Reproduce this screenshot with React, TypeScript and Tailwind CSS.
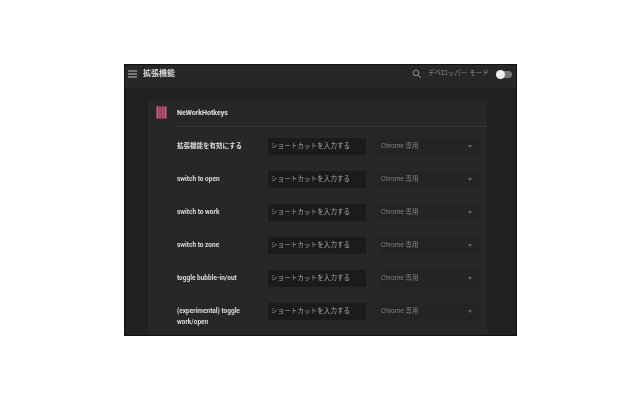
const rows = [
  "拡張機能を有効にする",
  "switch to open",
  "switch to work",
  "switch to zone",
  "toggle bubble-in/out",
];

const cjk = "font-['Roboto','Noto_Sans_CJK_JP',sans-serif]";

function Controls() {
  return (
    <div className="flex items-center">
      <div className="w-[98px] h-[17px] bg-[#1b1b1c] flex items-center pl-[3px] text-[6.5px] tracking-[0.1px] text-[#a8a8a8] whitespace-nowrap">
        ショートカットを入力する
      </div>
      <div className="w-[100px] h-[17px] ml-[13px] bg-[#242425] flex items-center justify-between pl-[2px] pr-[7px] text-[6.5px] text-[#808080] whitespace-nowrap">
        <span>Chrome 専用</span>
        <span className="w-0 h-0 border-x-[2.5px] border-x-transparent border-t-[3px] border-t-[#666]" />
      </div>
    </div>
  );
}

export default function App() {
  return (
    <div className={`w-[640px] h-[400px] bg-white pt-[64px] pl-[124px] ${cjk}`}>
      <div className="w-[393px] h-[272px] bg-[#212122] border border-[#111] overflow-hidden flex flex-col blur-[0.45px]">
        <header className="h-[23px] shrink-0 bg-[#272728] flex items-center pl-[3px] pr-[4px] pb-[5px]">
          <svg width="9" height="8" viewBox="0 0 9 8" className="shrink-0">
            <path d="M0 1h9M0 4h9M0 7h9" stroke="#c4c4c4" strokeWidth="1" />
          </svg>
          <span className="ml-[6px] text-[8px] font-bold text-[#dedede] whitespace-nowrap">拡張機能</span>
          <svg width="10" height="10" viewBox="0 0 10 10" className="ml-auto shrink-0" fill="none">
            <circle cx="4" cy="4" r="2.8" stroke="#949494" strokeWidth="1" />
            <path d="M6.2 6.2 9 9" stroke="#949494" strokeWidth="1" />
          </svg>
          <span className="ml-[6px] text-[6.5px] tracking-[0.1px] text-[#909090] whitespace-nowrap">デベロッパー モード</span>
          <div className="relative ml-[7px] w-[16px] h-[7px] rounded-full bg-[#757575] shrink-0">
            <span className="absolute left-0 -top-[1px] w-[9px] h-[9px] rounded-full bg-[#ececec]" />
          </div>
        </header>
        <main className="flex-1 min-h-0 pt-[12px] pl-[23px]">
          <section className="w-[339px] h-[300px] bg-[#272728]">
            <div className="h-[27px] flex items-center border-b border-[#363637] ml-[29px] relative">
              <svg width="11" height="13" viewBox="0 0 11 13" className="absolute -left-[21px] top-[6px]">
                <rect width="11" height="13" fill="#7d3a52" />
                <path d="M1.5 1v11M4 1v11M7 1v11M9.5 1v11" stroke="#d9688e" strokeWidth="1.1" />
              </svg>
              <span className="text-[7px] font-bold text-[#e0e0e0] whitespace-nowrap">NeWorkHotkeys</span>
            </div>
            <div className="pt-[11px] flex flex-col gap-[16px]">
              {rows.map((r) => (
                <div key={r} className="h-[17px] flex items-center pl-[29px]">
                  <span className="w-[91px] text-[6.5px] font-bold text-[#dcdcdc] whitespace-nowrap">{r}</span>
                  <Controls />
                </div>
              ))}
              <div className="flex items-start pl-[29px]">
                <span className="w-[91px] pt-[3px] text-[6.5px] leading-[10.5px] font-bold text-[#dcdcdc]">
                  (experimental) toggle<br />work/open
                </span>
                <Controls />
              </div>
            </div>
          </section>
        </main>
      </div>
    </div>
  );
}
